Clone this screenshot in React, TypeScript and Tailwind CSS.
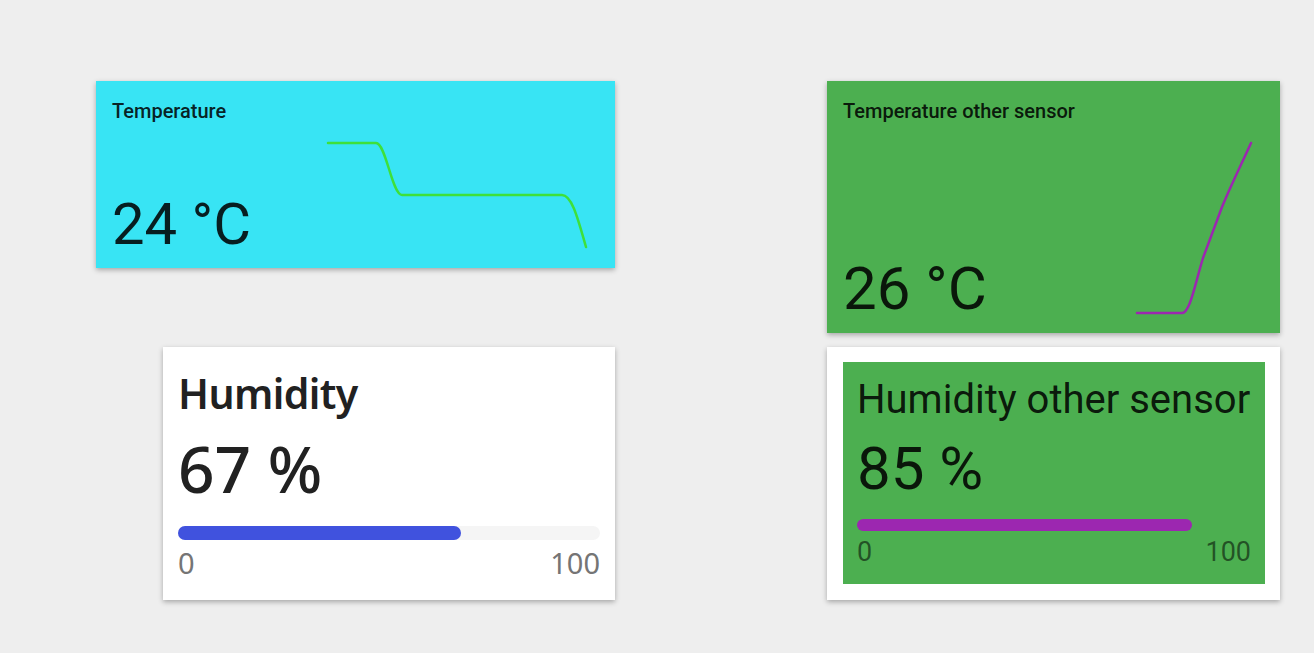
import React from "react";

const roboto = { fontFamily: "Roboto, 'Liberation Sans', sans-serif" };
const noto = { fontFamily: "'Noto Sans', 'Open Sans', sans-serif" };

const App: React.FC = () => {
  return (
    <div className="flex h-[653px] w-full overflow-hidden bg-[#eeeeee]" style={roboto}>
      {/* left column */}
      <div className="ml-[96px] mt-[81px] flex w-[519px] flex-col items-end">
        {/* temperature */}
        <div className="flex h-[187px] w-[519px] flex-col bg-[#38e4f4] pb-[15px] shadow-[0_2px_5px_rgba(0,0,0,0.3)]">
          <div className="pl-4 pt-[20px] text-[20px] font-medium leading-none text-black/87">
            Temperature
          </div>
          <div className="flex flex-1 items-end justify-between pl-4">
            <div className="text-[58px] leading-none text-black/87">24 °C</div>
            <svg width="264" height="114" viewBox="0 0 264 114" className="mr-[25px]">
              <path
                d="M2 4 H50 C60 4 66 56 76 56 H236 C246 56 252 80 260 108"
                fill="none"
                stroke="#3ee03a"
                strokeWidth="2.5"
                strokeLinecap="round"
              />
            </svg>
          </div>
        </div>

        {/* humidity */}
        <div
          className="mt-[79px] flex h-[253px] w-[452px] flex-col bg-white px-[15px] pt-[26px] shadow-[0_2px_5px_rgba(0,0,0,0.3)]"
          style={noto}
        >
          <div className="text-[41px] font-semibold leading-none tracking-[-0.6px] text-[#212121]">
            Humidity
          </div>
          <div className="mt-[23px] text-[64px] font-medium leading-none text-[#212121]">67 %</div>
          <div className="mt-[25px] h-[14px] w-full rounded-full bg-[#f5f5f5]">
            <div className="h-full rounded-full bg-[#4052de]" style={{ width: "67%" }}></div>
          </div>
          <div className="mt-[8px] flex justify-between text-[29px] leading-none text-[#757575]">
            <span>0</span>
            <span>100</span>
          </div>
        </div>
      </div>

      {/* right column */}
      <div className="ml-[212px] mt-[81px] flex w-[453px] flex-col">
        {/* temperature other sensor */}
        <div className="flex h-[252px] w-[453px] flex-col bg-[#4caf50] pb-[14px] shadow-[0_2px_5px_rgba(0,0,0,0.3)]">
          <div className="pl-4 pt-[20px] text-[20px] font-medium leading-none text-black/87">
            Temperature other sensor
          </div>
          <div className="flex flex-1 items-end justify-between pl-4">
            <div className="text-[60px] leading-none text-black/87">26 °C</div>
            <svg width="122" height="181" viewBox="0 0 122 181" className="mr-[24px]">
              <path
                d="M3 175 H48 C56 175 61 146 69 120 L88 69 C98 45 108 25 117 5"
                fill="none"
                stroke="#9c27b0"
                strokeWidth="2.5"
                strokeLinecap="round"
              />
            </svg>
          </div>
        </div>

        {/* humidity other sensor */}
        <div className="mt-[14px] h-[253px] w-[453px] bg-white pb-4 pl-4 pr-[15px] pt-[15px] shadow-[0_2px_5px_rgba(0,0,0,0.3)]">
          <div className="flex h-full flex-col bg-[#4caf50] px-[14px] pt-[18px]">
            <div className="text-[40px] leading-none text-black/87">Humidity other sensor</div>
            <div className="mt-[19px] text-[60px] leading-none text-black/87">85 %</div>
            <div className="mt-[20px] h-[12px] w-full rounded-full">
              <div className="h-full rounded-full bg-[#9c27b0]" style={{ width: "85%" }}></div>
            </div>
            <div className="mt-[8px] flex justify-between text-[27px] leading-none text-black/54">
              <span>0</span>
              <span>100</span>
            </div>
          </div>
        </div>
      </div>
    </div>
  );
};

export default App;
